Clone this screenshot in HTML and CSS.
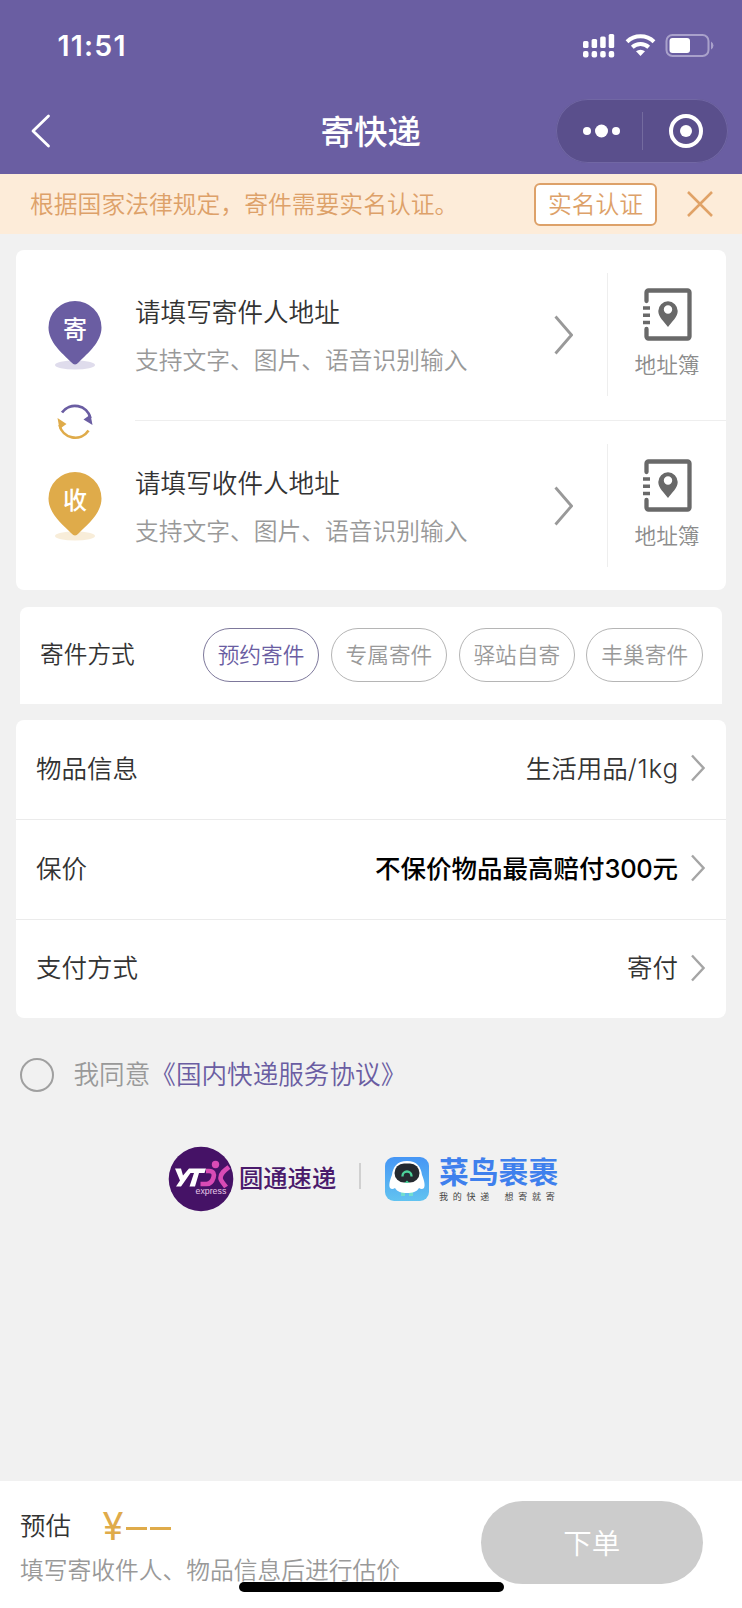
FILE: index.html
```html
<!DOCTYPE html>
<html lang="zh-CN">
<head>
<meta charset="utf-8">
<title>寄快递</title>
<link rel="stylesheet" href="styles.css">
</head>
<body>
<svg class="defs" width="0" height="0">
  <symbol id="book" viewBox="0 0 50 53">
    <path d="M4.500 13V4.500a2 2 0 0 1 2-2H45.500a2 2 0 0 1 2 2v44a2 2 0 0 1-2 2H6.500a2 2 0 0 1-2-2V41" fill="none" stroke="#696969" stroke-width="4.300" stroke-linecap="round"/>
    <path d="M1 20h7M1 27.200h7M1 34.500h7" stroke="#696969" stroke-width="3.600"/>
    <path fill-rule="evenodd" fill="#696969" d="M26 39C22 33.500 16.300 29 16.300 23a9.700 9.700 0 0 1 19.400 0C35.700 29 30 33.500 26 39zM26 17.300a4.200 4.200 0 1 0 0 8.400a4.200 4.200 0 1 0 0-8.400z"/>
  </symbol>
  <symbol id="chev-l" viewBox="0 0 19 40"><path d="M1.500 1.500L17.500 20L1.500 38.500" fill="none" stroke="#999" stroke-width="2.800"/></symbol>
  <symbol id="chev-s" viewBox="0 0 14 28"><path d="M1 1.500L12.500 14L1 26.500" fill="none" stroke="#a5a5a5" stroke-width="2.400"/></symbol>
</svg>
<header class="header">
  <div class="status">
    <span class="time">11:51</span>
    <svg class="status-icons" width="134" height="26" viewBox="0 0 134 26" fill="#fff">
      <rect x="1" y="9" width="5.500" height="7" rx="1.500"/><rect x="9.600" y="7" width="5.500" height="9" rx="1.500"/><rect x="18.200" y="4.500" width="5.500" height="11.500" rx="1.500"/><rect x="26.700" y="2" width="5.500" height="14" rx="1.500"/>
      <rect x="1" y="19" width="5.500" height="6.500" rx="2"/><rect x="9.600" y="19" width="5.500" height="6.500" rx="2"/><rect x="18.200" y="19" width="5.500" height="6.500" rx="2"/><rect x="26.700" y="19" width="5.500" height="6.500" rx="2"/>
      <g fill="none" stroke="#fff" stroke-width="4"><path d="M45 9.800a19.500 19.500 0 0 1 27 0"/><path d="M50.300 15.200a12 12 0 0 1 16.400 0"/></g>
      <path d="M54 19.300a7 7 0 0 1 9 0L58.500 24z"/>
      <rect x="84.500" y="3" width="42" height="21" rx="6" fill="none" stroke="#a9a1cb" stroke-width="2"/>
      <rect x="87.500" y="6" width="20.500" height="15" rx="3"/>
      <path d="M129 9.500v8a4.500 4.500 0 0 0 0-8z" fill="#a9a1cb"/>
    </svg>
  </div>
  <div class="nav">
    <svg class="back" width="20" height="34" viewBox="0 0 20 34"><path d="M17.500 2L2 17L17.500 32" fill="none" stroke="#fff" stroke-width="2.800" stroke-linecap="round" stroke-linejoin="round"/></svg>
    <h1 class="title">寄快递</h1>
    <div class="capsule">
      <svg width="172" height="64" viewBox="0 0 172 64"><g fill="#fff"><circle cx="31" cy="32" r="4"/><circle cx="45.500" cy="32" r="6.500"/><circle cx="60" cy="32" r="4"/><circle cx="130" cy="32" r="6"/></g><circle cx="130" cy="32" r="15" fill="none" stroke="#fff" stroke-width="4"/><path d="M86.500 13v38" stroke="#746b9f"/></svg>
    </div>
  </div>
</header>

<div class="notice">
  <span class="notice-text">根据国家法律规定，寄件需要实名认证。</span>
  <button class="verify">实名认证</button>
  <svg class="close" width="28" height="28" viewBox="0 0 28 28"><path d="M2 2L26 26M26 2L2 26" stroke="#e0a267" stroke-width="2.500"/></svg>
</div>

<main class="main">
  <section class="card addresses">
    <div class="pins">
      <svg width="60" height="74" viewBox="0 0 60 74"><ellipse cx="30" cy="66" rx="20" ry="4.500" fill="#dfdcec"/><path d="M30 65.500Q28.500 65.500 26 63C17 54 3.500 43 3.500 28.500a26.500 26.500 0 0 1 53 0C56.500 43 43 54 34 63Q31.500 65.500 30 65.500z" fill="#6a5da2"/><text class="pin-text" x="30" y="39">寄</text></svg>
      <svg width="60" height="45" viewBox="0 0 60 45"><path d="M17 13.500A16 16 0 0 1 45.500 19" fill="none" stroke="#6a5da2" stroke-width="2.700"/><path d="M38.500 20.500L45.500 15.500L47.500 26z" fill="#6a5da2"/><path d="M43.500 31.500A16 16 0 0 1 14.500 26" fill="none" stroke="#dfab4a" stroke-width="2.700"/><path d="M12.500 19L14.500 30L21.500 25z" fill="#dfab4a"/></svg>
      <svg width="60" height="74" viewBox="0 0 60 74"><ellipse cx="30" cy="66" rx="20" ry="4.500" fill="#f8edd9"/><path d="M30 65.500Q28.500 65.500 26 63C17 54 3.500 43 3.500 28.500a26.500 26.500 0 0 1 53 0C56.500 43 43 54 34 63Q31.500 65.500 30 65.500z" fill="#dfab4a"/><text class="pin-text" x="30" y="39">收</text></svg>
    </div>
    <div class="address-list">
      <div class="address">
        <div class="address-copy"><div class="address-title">请填写寄件人地址</div><div class="address-sub">支持文字、图片、语音识别输入</div></div>
        <svg class="arrow" width="19" height="40"><use href="#chev-l"/></svg>
        <div class="book"><svg width="50" height="53"><use href="#book"/></svg><span>地址簿</span></div>
      </div>
      <div class="address">
        <div class="address-copy"><div class="address-title">请填写收件人地址</div><div class="address-sub">支持文字、图片、语音识别输入</div></div>
        <svg class="arrow" width="19" height="40"><use href="#chev-l"/></svg>
        <div class="book"><svg width="50" height="53"><use href="#book"/></svg><span>地址簿</span></div>
      </div>
    </div>
  </section>

  <section class="methods">
    <span class="methods-label">寄件方式</span>
    <div class="pills"><span class="pill active">预约寄件</span><span class="pill">专属寄件</span><span class="pill">驿站自寄</span><span class="pill">丰巢寄件</span></div>
  </section>

  <section class="card details">
    <div class="detail"><span>物品信息</span><span class="value">生活用品<span class="latin">/1kg</span></span><svg width="14" height="28"><use href="#chev-s"/></svg></div>
    <div class="detail"><span>保价</span><span class="value strong">不保价物品最高赔付<span class="latin">300</span>元</span><svg width="14" height="28"><use href="#chev-s"/></svg></div>
    <div class="detail"><span>支付方式</span><span class="value">寄付</span><svg width="14" height="28"><use href="#chev-s"/></svg></div>
  </section>

  <div class="agree"><span class="radio"></span><span>我同意<a class="link">《国内快递服务协议》</a></span></div>

  <div class="brands">
    <svg width="66" height="66" viewBox="0 0 66 66">
      <circle cx="33" cy="33" r="32.300" fill="#451266"/>
      <path d="M7 22.500h6l2 7 6-7h17l-1.500 4.500h-5.500L27 40.500h-5.500L26 27h-3.500L15.500 37 13 40.500H8l4-6z" fill="#fff"/>
      <g fill="none" stroke="#d94bb5" stroke-width="4.600"><path d="M38 25H41c4.500 0 5.500 3 4.500 6.500-1.500 5-4 6.500-7 6.500h-6"/><path d="M61 21c-4 3-8.500 6-8.500 11 0 3 3 5 5.500 9"/></g><circle cx="47.500" cy="18.500" r="3.700" fill="#d94bb5"/>
      <text class="express" x="27.500" y="48">express</text>
    </svg>
    <span class="yto">圆通速递</span>
    <span class="brand-line"></span>
    <svg class="bird" width="44" height="44" viewBox="0 0 44 44">
      <defs><linearGradient id="sky" x2="0" y2="1"><stop stop-color="#4696f5"/><stop offset="1" stop-color="#62c3f0"/></linearGradient></defs>
      <rect width="44" height="44" rx="9" fill="url(#sky)"/>
      <path d="M16 35h4v4h-4zM24 35h4v4h-4z" fill="#70ddd0"/>
      <path d="M22 4C12 4 8 10 7 18C5 23 3.500 28 5 31Q7 33 10 31C12 35 17 36 22 36S32 35 34 31Q37 33 39 31C40.500 28 39 23 37 18C36 10 32 4 22 4z" fill="#fff"/>
      <rect x="9.500" y="6.500" width="25" height="19" rx="9.500" fill="#252a30"/><path d="M17.500 19.500v-.500a4.500 4.500 0 0 1 9 0v.500" fill="none" stroke="#4dd39b" stroke-width="2.300"/><path d="M19.500 26l2.500-2.500 2.500 2.500z" fill="#4dd39b"/>
    </svg>
    <div class="guoguo"><div class="guoguo-name">菜鸟裹裹</div><div class="slogan"><span>我的快递</span><span>想寄就寄</span></div></div>
  </div>
</main>

<footer class="footer">
  <div class="estimate">
    <div class="estimate-row"><span>预估</span><span class="price">¥</span><span class="dash"></span><span class="dash"></span></div>
    <div class="hint">填写寄收件人、物品信息后进行估价</div>
  </div>
  <button class="submit">下单</button>
  <div class="home-bar"></div>
</footer>
</body>
</html>
```
FILE: styles.css
```css
* { box-sizing: border-box; }
body { margin: 0; width: 742px; height: 1608px; display: flex; flex-direction: column; overflow: hidden; background: #f1f1f1; color: #333; font: 350 25.500px/36px "Noto Sans CJK SC", sans-serif; }
svg { display: block; flex: none; }
span, .title, .address-title, .address-sub { white-space: nowrap; }
button { font-family: inherit; font-weight: inherit; padding: 0; }
.defs { position: absolute; }

.header { height: 174px; background: #6a5ea2; color: #fff; flex: none; }
.status { height: 90px; padding: 0 26px 0 57.500px; display: flex; justify-content: space-between; align-items: center; }
.time { font: 600 28.500px/34px Inter, sans-serif; letter-spacing: 1.200px; padding-top: 2px; }
.nav { height: 82px; display: grid; grid-template-columns: 1fr 110px 1fr; align-items: center; padding: 0 14px 0 31px; }
.title { margin: -3px 2px 0 -4px; font-size: 33.500px; line-height: 44px; font-weight: 500; }
.capsule { justify-self: end; width: 172px; height: 64px; border-radius: 32px; background: #5a4f8c; box-shadow: inset 0 0 0 1px #7167a4; }

.notice { height: 60px; flex: none; display: flex; align-items: center; padding: 0 28.500px 0 30px; background: #fdecd9; color: #dda169; font-size: 23.800px; }
.notice-text { flex: 1; margin-top: -3px; }
.verify { width: 123px; height: 43px; border: 2px solid #dda169; border-radius: 6px; background: #fff; color: #dda169; font-size: 23.800px; line-height: 36px; margin-right: 28.500px; padding-bottom: 2px; }

.main { flex: 1; padding: 15.500px 16px 0; }
.card { background: #fff; border-radius: 8px; }
.addresses { height: 340.500px; display: flex; }
.pins { width: 119px; padding: 49.500px 0 0 29px; display: flex; flex-direction: column; }
.pins svg:nth-child(2) { margin: 26px 0; }
.pin-text { font-size: 24px; font-weight: 500; fill: #fff; text-anchor: middle; }
.address-list { flex: 1; }
.address { height: 170.500px; display: flex; align-items: center; }
.address + .address { border-top: 1px solid #eee; }
.address-copy { width: 419px; }
.address-title { font-size: 25.600px; margin-bottom: 11.500px; margin-top: 0; }
.address-sub { font-size: 23.750px; color: #999; }
.arrow { margin-right: 34px; }
.book { flex: 1; height: 123px; border-left: 1px solid #eee; display: flex; flex-direction: column; align-items: center; padding-top: 14.500px; font-size: 21.700px; color: #8c8c8c; }
.book span { line-height: 32px; margin-top: 7px; }

.methods { height: 97px; margin: 16.500px 4px 16px; padding: 0 19px 0 20px; border-radius: 8px 8px 0 0; background: #fff; display: flex; align-items: center; justify-content: space-between; }
.methods-label { font-size: 23.700px; margin-top: -4px; }
.pills { display: flex; gap: 11.300px; }
.pill { width: 116.600px; height: 54px; border: 1px solid #b5b5b5; border-radius: 27px; text-align: center; font-size: 21.700px; line-height: 49px; color: #999; }
.pill.active { color: #6a5da2; border-color: #7d789b; }

.details { height: 298.500px; }
.detail { height: 99.500px; padding: 0 21px 0 20px; display: flex; align-items: center; gap: 13px; }
.detail + .detail { border-top: 1px solid #ebebeb; }
.detail > span { margin-top: -5px; }
.detail svg { margin-top: -2px; }
.value { flex: 1; text-align: right; font-size: 25.500px; }
.latin { font-family: Inter, sans-serif; font-size: 26px; line-height: 1; letter-spacing: .800px; margin-right: -1px; }
.strong { font-weight: 500; color: #000; }
.strong .latin { font-size: 25.500px; letter-spacing: -.300px; margin: 0; }

.agree { display: flex; align-items: center; gap: 20px; margin: 38.500px 0 0 3.500px; height: 36px; color: #999; font-size: 25.600px; }
.radio { width: 34px; height: 34px; border: 2px solid #a0a0a0; border-radius: 50%; }
.agree span:last-child { margin-top: -4px; }
.link { color: #6a5da2; }

.brands { display: flex; align-items: center; margin: 53.500px 0 0 152px; height: 66px; }
.express { font: 500 8.800px "Liberation Sans", sans-serif; fill: #e9c9e8; }
.yto { margin: -5px 0 0 5px; width: 98px; color: #4a1a6c; font-size: 24.300px; font-weight: 500; }
.brand-line { width: 2px; height: 26px; margin: -6px 24px 0 22px; background: #d0d0d0; }
.guoguo { margin-left: 10px; }
.guoguo-name { font-size: 29.800px; line-height: 36px; font-weight: 700; color: #3f80ed; margin-top: -3px; }
.slogan { display: flex; gap: 10.500px; font-size: 9px; line-height: 14px; letter-spacing: 4.750px; color: #444; padding-top: 2px; font-weight: 400; }

.footer { height: 127px; flex: none; position: relative; background: #fff; display: flex; justify-content: space-between; padding: 20px 39.500px 0 20px; }
.estimate { padding-top: 5px; }
.estimate-row { display: flex; align-items: center; height: 36px; }
.price { margin: 4px 0 0 30px; width: 24px; text-align: center; color: #dfab4a; font: 400 38px/36px Inter, sans-serif; }
.dash { width: 21px; height: 3px; margin: 9px 0 0 3px; background: #dfab4a; }
.price + .dash { margin-left: 1px; }
.hint { font-size: 23.750px; color: #999; margin-top: 9px; }
.submit { width: 221.500px; height: 83px; border: 0; border-radius: 42px; background: #ccc; color: #fff; font-size: 28.500px; padding-bottom: 2px; }
.home-bar { position: absolute; left: 239px; bottom: 16px; width: 265px; height: 10px; border-radius: 5px; background: #000; }
```
